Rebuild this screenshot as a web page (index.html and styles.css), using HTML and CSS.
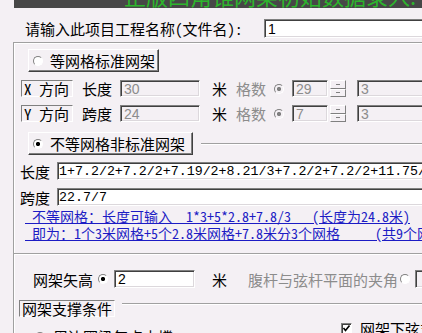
FILE: index.html
```html
<!DOCTYPE html>
<html lang="zh-CN">
<head>
    <meta charset="UTF-8">
    <title>网架初始数据录入</title>
    <link rel="stylesheet" href="styles.css">
</head>
<body>
    <div class="window">
        <div class="banner"><span class="banner-text">正版四角锥网架初始数据录入:</span></div>

        <div class="name-row">
            <label class="name-label" for="projName">请输入此项目工程名称(文件名):</label>
            <input class="field name-field" id="projName" value="1">
        </div>

        <div class="frame">
            <div class="mode-row">
                <button class="mode-btn btn-equal"><span class="radio"></span>等网格标准网架</button>
            </div>

            <div class="dir-row">
                <span class="dir-tag">X 方向</span>
                <span class="lbl">长度</span>
                <input class="field off len-field" value="30" disabled>
                <span class="unit">米</span>
                <span class="lbl dim">格数</span>
                <span class="radio on dim-radio"></span>
                <input class="field off count-field" value="29" disabled>
                <span class="spin"><span></span><span></span></span>
                <input class="field off step-field" value="3" disabled>
            </div>

            <div class="dir-row">
                <span class="dir-tag">Y 方向</span>
                <span class="lbl">跨度</span>
                <input class="field off len-field" value="24" disabled>
                <span class="unit">米</span>
                <span class="lbl dim">格数</span>
                <span class="radio on dim-radio"></span>
                <input class="field off count-field" value="7" disabled>
                <span class="spin"><span></span><span></span></span>
                <input class="field off step-field" value="3" disabled>
            </div>

            <div class="mode-row">
                <button class="mode-btn btn-free"><span class="radio on"></span>不等网格非标准网架</button>
                <span class="etch rule"></span>
            </div>

            <div class="expr-row">
                <span class="expr-lbl">长度</span>
                <input class="field expr-field" value="1+7.2/2+7.2/2+7.19/2+8.21/3+7.2/2+7.2/2+11.75/3">
            </div>
            <div class="expr-row">
                <span class="expr-lbl">跨度</span>
                <input class="field expr-field" value="22.7/7">
            </div>

            <p class="hint"><span> 不等网格：长度可输入  1*3+5*2.8+7.8/3   (长度为24.8米)</span>
<span> 即为：1个3米网格+5个2.8米网格+7.8米分3个网格     (共9个网格)</span></p>

            <div class="etch sep"></div>

            <div class="rise-row">
                <span class="rise-lbl">网架矢高</span>
                <span class="radio on"></span>
                <input class="field rise-field" value="2">
                <span class="unit">米</span>
                <span class="dim angle-lbl">腹杆与弦杆平面的夹角</span>
                <span class="radio"></span>
                <input class="field off angle-field" value="" disabled>
            </div>

            <div class="support-head">
                <span class="support-tag">网架支撑条件</span>
                <span class="etch support-line"></span>
            </div>

            <div class="support-row">
                <span class="support-opt"><span class="radio on"></span>周边圈梁每点支撑</span>
                <span class="support-check">
                    <span class="check"><svg width="9" height="9" viewBox="0 0 9 9"><polyline points="1.5,4 3.5,6.5 7.5,1.5" fill="none" stroke="#000" stroke-width="1.6"/></svg></span>
                    网架下弦支座
                </span>
            </div>
        </div>
    </div>
</body>
</html>
```

FILE: styles.css
```css
html, body {
    margin: 0;
    padding: 0;
    background: #f4f0f4;
}
body {
    font-family: "Noto Sans Mono CJK SC", "Noto Sans CJK SC", sans-serif;
    font-size: 15px;
    color: #000;
}
.window {
    width: 422px;
    height: 333px;
    overflow: hidden;
}

/* top banner, only its lower edge is on screen */
.banner {
    margin-left: 14px;
    height: 8px;
    padding-left: 110px;
    background: #474747;
    overflow: hidden;
}
.banner-text {
    display: block;
    margin-top: -16px;
    font-family: "Noto Sans CJK SC", sans-serif;
    font-size: 22px;
    line-height: 22px;
    color: #2db52d;
    white-space: nowrap;
}

/* generic win32 bits */
.field {
    box-sizing: border-box;
    height: 18px;
    margin: 0;
    padding: 0 0 0 3px;
    border: 1px solid;
    border-color: #808080 #fff #fff #808080;
    box-shadow: inset 1px 1px 0 #404040, inset -1px -1px 0 #dcd8dc;
    background: #fff;
    color: #000;
    font: 14px "Liberation Sans", sans-serif;
    outline: none;
}
.field.off {
    background: #f4f0f4;
    color: #8c8c8c;
}
.radio {
    box-sizing: border-box;
    flex: none;
    width: 10px;
    height: 10px;
    border-radius: 50%;
    border: 1px solid;
    border-color: #808080 #fff #fff #808080;
    background: #fff;
}
.radio.on {
    background: radial-gradient(circle, #000 0 1.8px, #fff 2.4px);
}
.dim-radio.on {
    background: radial-gradient(circle, #808080 0 1.8px, #f4f0f4 2.4px);
}
.dim {
    color: #8c8c8c;
}
.etch {
    display: block;
    height: 0;
    border-top: 1px solid #a0a0a0;
    border-bottom: 1px solid #fff;
}
.dir-row > *,
.rise-row > *,
.expr-row > *,
.support-row > *,
.name-row > * {
    flex: none;
}

/* project name */
.name-row {
    display: flex;
    align-items: center;
    height: 19px;
    margin-top: 11px;
}
.name-label {
    box-sizing: border-box;
    width: 264px;
    padding-left: 25px;
    white-space: nowrap;
}
.name-field {
    width: 200px;
    height: 19px;
}

/* main frame */
.frame {
    margin: 4px 0 0 13px;
    height: 300px;
    border-top: 1px solid #a0a0a0;
    border-left: 1px solid #a0a0a0;
    box-shadow: inset 1px 1px 0 #fff;
}
.mode-row {
    display: flex;
    align-items: center;
    padding-left: 14px;
    margin-top: 6px;
}
.mode-btn {
    box-sizing: border-box;
    flex: none;
    display: flex;
    align-items: center;
    height: 23px;
    margin: 0;
    padding: 0 0 0 4px;
    border: 1px solid;
    border-color: #fff #404040 #404040 #fff;
    box-shadow: inset -1px -1px 0 #808080;
    background: #f4f0f4;
    font: inherit;
    color: #000;
    white-space: nowrap;
}
.mode-btn .radio {
    margin-right: 7px;
}
.btn-equal {
    width: 131px;
}
.btn-free {
    width: 165px;
}
.mode-row + .dir-row {
    margin-top: 8px;
}
.dir-row + .mode-row {
    margin-top: 10px;
}
.rule {
    flex: 1;
    margin-left: 8px;
}

/* X / Y rows */
.dir-row {
    display: flex;
    align-items: center;
    height: 17px;
    margin-top: 8px;
    padding-left: 7px;
    white-space: nowrap;
}
.dir-tag {
    box-sizing: border-box;
    width: 52px;
    height: 17px;
    padding-left: 2px;
    line-height: 15px;
    border: 1px solid;
    border-color: #808080 #fff #fff #808080;
    white-space: pre;
}
.lbl {
    margin-left: 9px;
    width: 30px;
}
.len-field {
    width: 80px;
    height: 17px;
    margin-left: 8px;
}
.unit {
    margin-left: 12px;
    width: 15px;
}
.dim.lbl {
    margin-left: 9px;
}
.dir-row .radio {
    margin-left: 8px;
}
.count-field {
    width: 36px;
    height: 17px;
    margin-left: 8px;
}
.spin {
    display: flex;
    flex-direction: column;
    width: 16px;
    height: 17px;
    margin-left: 2px;
}
.spin span {
    flex: 1;
    border: 1px solid;
    border-color: #fff #808080 #808080 #fff;
    background: linear-gradient(#808080, #808080) center / 4px 1px no-repeat;
}
.step-field {
    width: 100px;
    height: 17px;
    margin-left: 11px;
}

/* free-grid expressions */
.expr-row {
    display: flex;
    align-items: center;
    height: 18px;
    margin-top: 7px;
    padding-left: 6px;
}
.expr-row + .expr-row {
    margin-top: 8px;
}
.expr-lbl {
    width: 37px;
}
.expr-field {
    width: 380px;
    font: 13.3px "Liberation Mono", monospace;
    padding-left: 1px;
}
.hint {
    margin: 2px 0 0;
    padding-left: 11px;
    font-size: 14px;
    line-height: 17px;
    color: #1c1cc4;
    white-space: pre;
}
.hint span {
    text-decoration: underline;
    text-underline-offset: 1px;
}
.sep {
    margin-top: 11px;
}

/* rise */
.rise-row {
    display: flex;
    align-items: center;
    height: 18px;
    margin-top: 15px;
    padding-left: 19px;
    white-space: nowrap;
}
.rise-lbl {
    width: 60px;
}
.rise-row .radio {
    margin-left: 5px;
}
.rise-field {
    width: 81px;
    margin-left: 6px;
}
.rise-row .unit {
    margin-left: 17px;
}
.angle-lbl {
    margin-left: 21px;
}
.angle-lbl + .radio {
    margin-left: 2px;
}
.angle-field {
    width: 60px;
    margin-left: 5px;
}

/* supports */
.support-head {
    display: flex;
    align-items: flex-start;
    margin-top: 12px;
    padding-left: 5px;
}
.support-tag {
    box-sizing: border-box;
    height: 17px;
    padding: 0 2px;
    line-height: 15px;
    border: 1px solid;
    border-color: #808080 #fff #fff #808080;
}
.support-line {
    flex: 1;
    margin: 3px 0 0 7px;
}
.support-row {
    display: flex;
    align-items: flex-start;
    white-space: nowrap;
}
.support-opt {
    display: flex;
    align-items: center;
    gap: 8px;
    width: 306px;
    margin: 9px 0 0 21px;
}
.support-check {
    display: flex;
    align-items: center;
    gap: 8px;
    margin-top: 1px;
}
.check {
    box-sizing: border-box;
    display: flex;
    align-items: center;
    justify-content: center;
    width: 11px;
    height: 11px;
    border: 1px solid;
    border-color: #808080 #fff #fff #808080;
    box-shadow: inset 1px 1px 0 #404040;
    background: #fff;
}
```
